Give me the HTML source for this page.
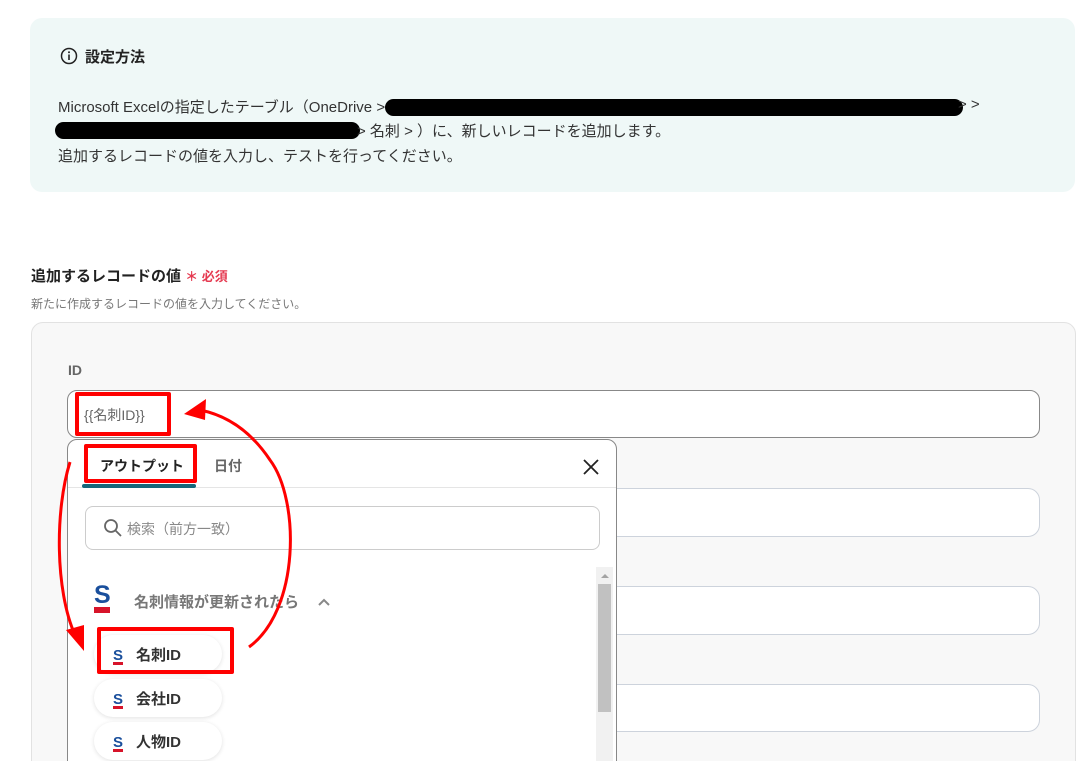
<!DOCTYPE html>
<html><head><meta charset="utf-8"><style>
*{box-sizing:border-box;margin:0;padding:0}
html,body{width:1080px;height:761px;overflow:hidden}
body{background:#fff;font-family:"Liberation Sans","Noto Sans CJK JP",sans-serif;color:#333;position:relative}
.a{position:absolute}
.info{left:30px;top:18px;width:1045px;height:174px;background:#eff8f7;border-radius:12px}
.t{font-size:15px;white-space:nowrap}
.inp{background:#fff;border:1px solid #cdd3dc;border-radius:12px}
.pill{background:#fff;border-radius:20px;box-shadow:0 1px 4px rgba(0,0,0,.12);width:128px;height:38px;left:94px}
.pill span{position:absolute;left:42px;top:9px;font-size:15px;font-weight:bold;color:#333}
.rb{border:4px solid #f00;border-radius:2px}
</style></head><body>
<div class="a info"></div>
<svg class="a" style="left:60px;top:47px" width="18" height="18" viewBox="0 0 18 18"><circle cx="9" cy="9" r="7.5" fill="none" stroke="#222" stroke-width="1.5"/><rect x="8.2" y="7.5" width="1.6" height="5.5" fill="#222"/><circle cx="9" cy="5.2" r="1" fill="#222"/></svg>
<div class="a t" style="left:85px;top:46px;font-weight:bold;color:#222">設定方法</div>
<div class="a t" style="left:58px;top:96px">Microsoft Excelの指定したテーブル（OneDrive &gt;</div>
<div class="a" style="left:385px;top:99px;width:578px;height:17px;background:#000;border-radius:9px"></div>
<div class="a t" style="left:958px;top:96px">&gt; &gt;</div>
<div class="a" style="left:55px;top:122px;width:305px;height:17px;background:#000;border-radius:9px"></div>
<div class="a t" style="left:357px;top:120px">&gt; 名刺 &gt; ）に、新しいレコードを追加します。</div>
<div class="a t" style="left:58px;top:145px">追加するレコードの値を入力し、テストを行ってください。</div>
<div class="a t" style="left:31px;top:265px;font-weight:bold;color:#222">追加するレコードの値 <span style="color:#e53950;font-size:13px">＊ 必須</span></div>
<div class="a" style="left:31px;top:295px;font-size:12px;color:#777;white-space:nowrap">新たに作成するレコードの値を入力してください。</div>
<div class="a" style="left:31px;top:322px;width:1045px;height:460px;background:#f8f8f8;border:1px solid #e2e2e2;border-radius:12px"></div>
<div class="a" style="left:68px;top:362px;font-size:14px;font-weight:bold;color:#666">ID</div>
<div class="a" style="left:67px;top:390px;width:973px;height:48px;background:#fff;border:1px solid #888;border-radius:10px"></div>
<div class="a" style="left:84px;top:405px;font-size:14px;color:#666">{{名刺ID}}</div>
<div class="a inp" style="left:560px;top:488px;width:480px;height:49px"></div>
<div class="a inp" style="left:560px;top:586px;width:480px;height:49px"></div>
<div class="a inp" style="left:560px;top:684px;width:480px;height:48px"></div>
<div class="a" style="left:67px;top:439px;width:550px;height:340px;background:#fff;border:1px solid #888;border-radius:10px 10px 0 0"></div>
<div class="a" style="left:100px;top:456px;font-size:14px;font-weight:bold;color:#222">アウトプット</div>
<div class="a" style="left:214px;top:456px;font-size:14px;font-weight:bold;color:#666">日付</div>
<div class="a" style="left:68px;top:487px;width:548px;height:1px;background:#e5e5e5"></div>
<div class="a" style="left:82px;top:484px;width:114px;height:4px;background:#16677a;border-radius:2px"></div>
<svg class="a" style="left:582px;top:458px" width="18" height="18"><path d="M2 2L16 16M16 2L2 16" stroke="#222" stroke-width="1.8"/></svg>
<div class="a" style="left:85px;top:506px;width:515px;height:44px;border:1px solid #ccc;border-radius:8px"></div>
<svg class="a" style="left:103px;top:518px" width="20" height="20"><circle cx="8" cy="8" r="6" fill="none" stroke="#666" stroke-width="1.8"/><path d="M12.5 12.5L18 18" stroke="#666" stroke-width="1.8"/></svg>
<div class="a" style="left:127px;top:519px;font-size:14px;color:#888">検索（前方一致）</div>
<div class="a" style="left:596px;top:567px;width:17px;height:194px;background:#f1f1f1"></div>
<div class="a" style="left:598px;top:584px;width:13px;height:128px;background:#c1c1c1"></div>
<div class="a" style="left:601px;top:574px;width:0;height:0;border-left:4px solid transparent;border-right:4px solid transparent;border-bottom:4px solid #a3a3a3"></div>
<div class="a" style="left:94px;top:581px;font-size:25px;font-weight:bold;color:#1a4f9c;font-family:'Liberation Sans',sans-serif">S</div>
<div class="a" style="left:94px;top:607px;width:16px;height:6px;background:#d7142a"></div>
<div class="a" style="left:134px;top:591px;font-size:15px;font-weight:bold;color:#777;white-space:nowrap">名刺情報が更新されたら</div>
<svg class="a" style="left:317px;top:597px" width="14" height="10"><path d="M2 8L7 3L12 8" fill="none" stroke="#888" stroke-width="2"/></svg>
<div class="a pill" style="top:635px"><span>名刺ID</span></div>
<div class="a pill" style="top:679px"><span>会社ID</span></div>
<div class="a pill" style="top:722px"><span>人物ID</span></div>
<svg class="a" style="left:0;top:0" width="1080" height="761">
<g font-family="Liberation Sans,sans-serif" font-weight="bold" font-size="15" fill="#1a4f9c"><text x="113" y="660">S</text><text x="113" y="704">S</text><text x="113" y="747">S</text></g>
<g fill="#d7142a"><rect x="113" y="662" width="10" height="3"/><rect x="113" y="706" width="10" height="3"/><rect x="113" y="749" width="10" height="3"/></g>
<path d="M249 647C300 610 300 500 270 460C250 430 225 415 200 410" fill="none" stroke="#f00" stroke-width="3"/>
<path d="M184 414L206 399L205 420Z" fill="#f00"/>
<path d="M70 462C55 510 55 590 75 635" fill="none" stroke="#f00" stroke-width="3"/>
<path d="M84 651L66 630L84 625Z" fill="#f00"/>
</svg>
<div class="a rb" style="left:75px;top:392px;width:96px;height:44px"></div>
<div class="a rb" style="left:84px;top:444px;width:113px;height:39px"></div>
<div class="a rb" style="left:97px;top:627px;width:137px;height:47px"></div>
</body></html>
